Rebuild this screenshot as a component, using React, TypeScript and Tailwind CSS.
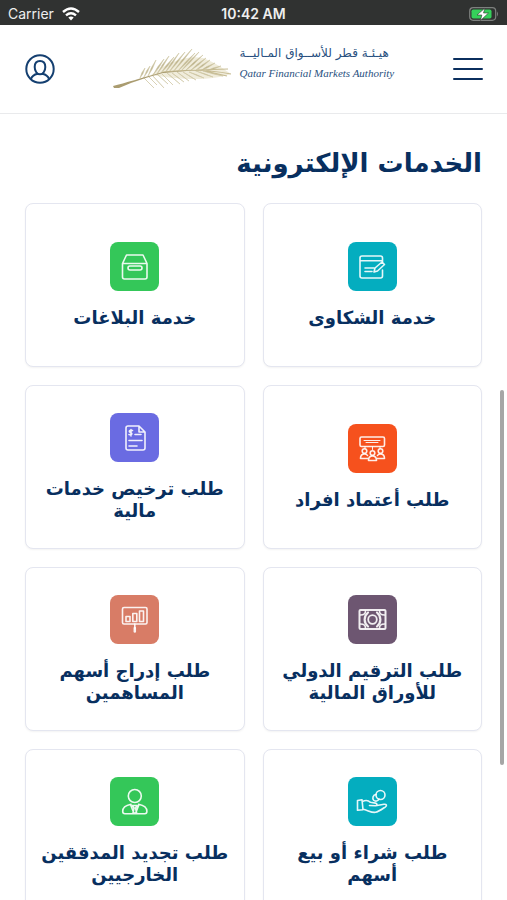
import type { ReactNode } from "react";

type Service = { lines: string[]; tile: string; icon: ReactNode };

const services: Service[] = [
  {
    lines: ["خدمة الشكاوى"],
    tile: "bg-[#04adbf]",
    icon: (
      <>
        <path d="M34.5 20V16a2 2 0 0 0-2-2h-18.500a2 2 0 0 0-2 2v18a2 2 0 0 0 2 2h18.500a2 2 0 0 0 2-2v-6M12 18.700h22.500" />
        <path d="M17 26h9M17 29.500h7" />
        <path d="M26 30l1-4 7-6 2.500 2.500-7 6.500z" />
      </>
    ),
  },
  {
    lines: ["خدمة البلاغات"],
    tile: "bg-[#34c759]",
    icon: (
      <>
        <path d="M12.500 21.500l4-8.500h16.500l4 8.500v13.500a2 2 0 0 1-2 2h-20.500a2 2 0 0 1-2-2zM12.500 21.500h24.500" />
        <rect x="18" y="24" width="14" height="4" rx="2" />
      </>
    ),
  },
  {
    lines: ["طلب أعتماد افراد"],
    tile: "bg-[#f6511d]",
    icon: (
      <>
        <rect x="12" y="13" width="24.500" height="9.500" rx="1.500" />
        <path d="M16 16.500h16M18 18.500h12M17 22.500v2M24.500 22.500v3M32 22.500v2" strokeWidth="1" />
        <circle cx="16.500" cy="27" r="2.300" />
        <circle cx="32.500" cy="27" r="2.300" />
        <circle cx="24.500" cy="29" r="2.300" />
        <path d="M20 34.500h-7.500c0-3 1.500-4.500 4-4.500 1.500 0 2.500.5 3 1.500M29 34.500h7.500c0-3-1.500-4.500-4-4.500-1.500 0-2.500.5-3 1.500M20.500 36.500c0-3 1.500-4.500 4-4.500s4 1.500 4 4.500z" />
      </>
    ),
  },
  {
    lines: ["طلب ترخيص خدمات", "مالية"],
    tile: "bg-[#6a6be2]",
    icon: (
      <>
        <path d="M18 13h11l6 6v16a2 2 0 0 1-2 2h-15a2 2 0 0 1-2-2v-20a2 2 0 0 1 2-2zM29 13v6h6" />
        <path d="M22.500 17.500c-3.500-.8-4 1.500-2 2s2 2.800-1.500 2M21 16.500v6.500" />
        <path d="M25 21.500h6M19 27.500h13M19 33h8" />
      </>
    ),
  },
  {
    lines: ["طلب الترقيم الدولي", "للأوراق المالية"],
    tile: "bg-[#6d5671]",
    icon: (
      <>
        <rect x="11.500" y="15" width="26" height="19" rx="1" strokeWidth="2" />
        <circle cx="24.500" cy="24.500" r="4.300" strokeWidth="1.800" />
        <path d="M20 17.500c-4.500 4-4.500 10 0 14M29 17.500c4.500 4 4.500 10 0 14" strokeWidth="2.200" />
        <path d="M17.500 16c0 2.500-2 4-5 4M17.500 33c0-2.500-2-4-5-4M31.500 16c0 2.500 2 4 5 4M31.500 33c0-2.500 2-4 5-4" />
      </>
    ),
  },
  {
    lines: ["طلب إدراج أسهم", "المساهمين"],
    tile: "bg-[#d87c66]",
    icon: (
      <>
        <rect x="12.500" y="12.500" width="24.500" height="16.500" rx="1.500" />
        <path d="M16 21.500h4v5h-4zM22.800 18.500h4v8h-4zM29.500 16h4v10.500h-4zM24.800 29v5" />
        <path d="M24.800 33v3.500" strokeWidth="2.500" />
      </>
    ),
  },
  {
    lines: ["طلب شراء أو بيع", "أسهم"],
    tile: "bg-[#04adbf]",
    icon: (
      <>
        <circle cx="32.500" cy="18" r="4.500" />
        <path d="M28 17.500c-3 .3-4 3.700-2.300 5.700 1.600 1.600 4.500.9 5.300-1.200" />
        <path d="M9.500 23.500l4.500-.8 1 10-5.500.6zM14.500 24.500c4-2 6-1 8 .8l5 .8c2 .5 1.800 2.700 0 2.700l-6-.3M29 28.500l7-1.200c2.500-.3 3.300 1.200 1.500 2.500-3 2-7 5-10 5.500-4 .7-8-2.300-12.700-3" />
      </>
    ),
  },
  {
    lines: ["طلب تجديد المدققين", "الخارجيين"],
    tile: "bg-[#34c759]",
    icon: (
      <>
        <circle cx="24.800" cy="19" r="6.500" />
        <path d="M21 27.300c-5 1-8.300 3-8.300 7 0 1.600.8 2.400 2.200 2.400h19.800c1.400 0 2.200-.8 2.200-2.400 0-4-3.300-6-8.300-7M20.500 27.500l3.500 9M29 27.500l-3.500 9M22.500 28.500h4.600l-1.500 2.500 1 5h-3.600l1-5z" />
      </>
    ),
  },
];

const upperLeaves = [
  [27, 31, 32, 21], [31, 30, 37, 19], [35, 29, 43, 13], [40, 28, 51, 12],
  [44, 27, 56, 9], [48, 26, 61, 10], [52, 26, 66, 6], [56, 25, 72, 5],
  [60, 25, 79, 2], [64, 25, 82, 6], [68, 24, 86, 5], [72, 24, 90, 8],
  [77, 24, 93, 11], [82, 24, 97, 13], [87, 24, 102, 16], [93, 24, 108, 19],
];
const lowerLeaves = [
  [30, 30, 41, 41], [35, 29, 44, 38], [39, 28, 51, 41], [44, 27, 55, 37],
  [49, 27, 60, 38], [54, 26, 67, 37], [59, 26, 71, 35], [64, 25, 76, 34],
  [70, 25, 83, 33], [76, 25, 91, 31], [83, 24, 100, 30], [90, 24, 110, 29],
];

function leaf([x1, y1, x2, y2]: number[]) {
  const mx = (x1 + x2) / 2;
  const my = (y1 + y2) / 2;
  return `M${x1} ${y1}Q${mx - 1} ${my - 1} ${x2} ${y2}Q${mx + 1} ${my + 1} ${x1} ${y1}Z`;
}

function Palm() {
  return (
    <svg viewBox="0 0 120 44" className="h-11 w-[120px] shrink-0" aria-hidden="true">
      <path d="M38 28C55 14 75 8 90 11C104 16 110 22 118 27C100 33 75 34 38 28Z" fill="#d9cfa5" opacity="0.4" />
      <g fill="#b5aa80" stroke="#cdc4a0" strokeWidth="0.600" opacity="0.900">
        {[...upperLeaves, ...lowerLeaves].map((l, i) => (
          <path key={i} d={leaf(l)} />
        ))}
      </g>
      <path d="M50 25C75 22 98 23 118 27M85 23l30-1M92 24l22 5" fill="none" stroke="#c6bb92" strokeWidth="1.200" />
      <path d="M0 39C12 36 28 31 50 25L85 23L50 26C30 31 15 37 6 41L1 41Z" fill="#aa9c70" />
    </svg>
  );
}

function StatusBar() {
  return (
    <div className="grid h-[25px] shrink-0 grid-cols-3 items-center bg-[#303231] px-2 pt-[2px] text-sm text-[#eeeeee]">
      <div className="flex items-center gap-2">
        <span>Carrier</span>
        <svg viewBox="0 0 18 14" className="h-[14px] w-[18px]" fill="none" stroke="#fff" strokeWidth="2.400" aria-hidden="true">
          <path d="M1 5Q9-2 17 5M4 8.300Q9 4 14 8.300" />
          <path d="M6.300 10.500Q9 8.300 11.700 10.500L9 13.500Z" fill="#fff" stroke="none" />
        </svg>
      </div>
      <span className="text-center font-semibold">10:42 AM</span>
      <svg viewBox="0 0 30 14" className="h-[14px] w-[30px] justify-self-end" aria-hidden="true">
        <rect x="0.700" y="0.700" width="26" height="12.600" rx="3.500" fill="none" stroke="#7d807e" strokeWidth="1.200" />
        <rect x="2.500" y="2.500" width="20" height="9" rx="1.800" fill="#35d05a" />
        <path d="M28 4.500q2 2.500 0 5z" fill="#7d807e" />
        <path d="M16 1L8 8h4.800l-1.300 5.500 8-7.500H14.500z" fill="#fff" stroke="#303231" strokeWidth="0.600" />
      </svg>
    </div>
  );
}

export default function App() {
  return (
    <div className="relative flex h-screen flex-col overflow-hidden bg-white font-['Inter',sans-serif]">
      <StatusBar />
      <header className="flex h-[89px] shrink-0 items-center justify-between border-b border-[#e9eaec] px-6">
        <button type="button" aria-label="الحساب" className="text-[#143f70]">
          <svg viewBox="0 0 32 32" className="size-8" fill="none" stroke="currentColor" strokeWidth="2">
            <circle cx="16" cy="16" r="13.700" />
            <path d="M16 8c-4 0-5.300 2.500-5.300 6s2 7.300 5.300 7.300 5.300-3.800 5.300-7.300-1.300-6-5.300-6zM7 26c1-3 3.500-4.500 6.500-5.200M25 26c-1-3-3.500-4.500-6.500-5.200" />
          </svg>
        </button>
        <a href="#" className="flex items-center gap-[7px] text-[#285080]">
          <Palm />
          <span className="flex w-[157px] flex-col items-start pb-3">
            <span dir="rtl" lang="ar" className="whitespace-nowrap font-['DejaVu_Sans',sans-serif] text-[12px] leading-5">
              هيـئـة قطر للأســواق المـاليــة
            </span>
            <span className="whitespace-nowrap font-['Liberation_Serif',serif] text-[11px] italic leading-5">
              Qatar Financial Markets Authority
            </span>
          </span>
        </a>
        <button type="button" aria-label="القائمة" className="flex w-[30px] flex-col gap-2">
          <span className="h-[2px] rounded-full bg-[#0b2f5e]" />
          <span className="h-[2px] rounded-full bg-[#0b2f5e]" />
          <span className="h-[2px] rounded-full bg-[#0b2f5e]" />
        </button>
      </header>

      <main
        dir="rtl"
        lang="ar"
        className="min-h-0 flex-1 overflow-hidden px-[25px] pt-[29px] font-['DejaVu_Sans',sans-serif] font-bold text-[#082f5f]"
      >
        <h1 className="text-[26px] leading-10">الخدمات الإلكترونية</h1>
        <div className="mt-5 grid grid-cols-2 gap-[18px]">
          {services.map((s) => (
            <a
              key={s.lines[0]}
              href="#"
              className="flex min-h-[164px] flex-col items-center justify-center gap-4 rounded-lg border border-[#e4e6f0] bg-white text-center shadow-xs"
            >
              <span className={`size-[49px] rounded-lg ${s.tile}`}>
                <svg
                  viewBox="0 0 49 49"
                  className="size-full"
                  fill="none"
                  stroke="#fff"
                  strokeOpacity="0.900"
                  strokeWidth="1.600"
                  strokeLinejoin="round"
                  strokeLinecap="round"
                  aria-hidden="true"
                >
                  {s.icon}
                </svg>
              </span>
              <span className="whitespace-nowrap text-lg leading-[22px]">
                {s.lines.map((line) => (
                  <span key={line} className="block">
                    {line}
                  </span>
                ))}
              </span>
            </a>
          ))}
        </div>
      </main>
      <div className="absolute right-[3px] top-[390px] h-[375px] w-1 rounded-full bg-[#a6a6a6]" />
    </div>
  );
}
